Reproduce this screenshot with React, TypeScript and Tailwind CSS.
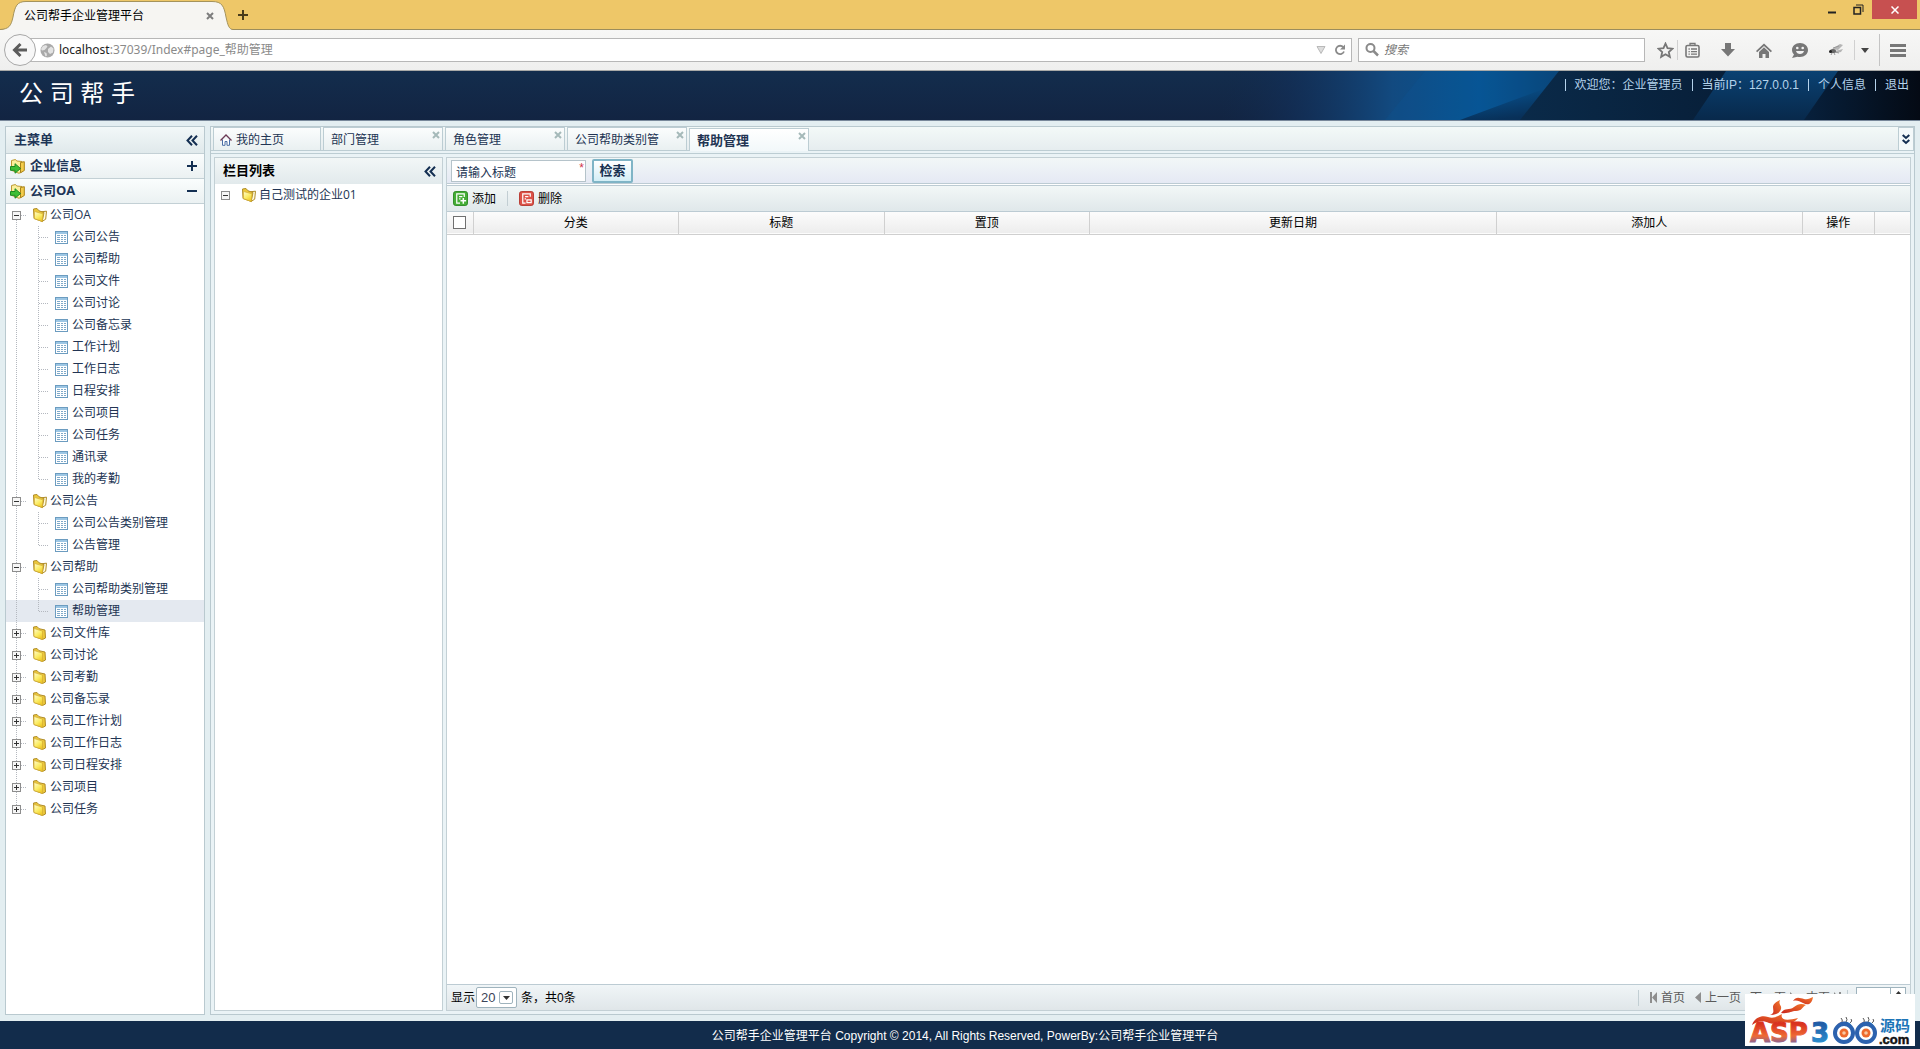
import React from "react";
import { Search } from "lucide-react";

type TreeGroup = { label: string; items?: string[] };

const groups: TreeGroup[] = [
  {
    label: "公司OA",
    items: [
      "公司公告", "公司帮助", "公司文件", "公司讨论", "公司备忘录", "工作计划",
      "工作日志", "日程安排", "公司项目", "公司任务", "通讯录", "我的考勤",
    ],
  },
  { label: "公司公告", items: ["公司公告类别管理", "公告管理"] },
  { label: "公司帮助", items: ["公司帮助类别管理", "帮助管理"] },
  { label: "公司文件库" },
  { label: "公司讨论" },
  { label: "公司考勤" },
  { label: "公司备忘录" },
  { label: "公司工作计划" },
  { label: "公司工作日志" },
  { label: "公司日程安排" },
  { label: "公司项目" },
  { label: "公司任务" },
];

const tabs = ["部门管理", "角色管理", "公司帮助类别管"];
const columns = ["分类", "标题", "置顶", "更新日期", "添加人", "操作"];

/* ---------- icons ---------- */

function Guide({ up, down, right, box }: { up?: boolean; down?: boolean; right?: boolean; box?: "plus" | "minus" }) {
  return (
    <svg width="22" height="22" viewBox="0 0 22 22" className="shrink-0" aria-hidden="true">
      <g stroke="#b4b8bf" strokeDasharray="1 1" fill="none">
        {up && <path d="M10.5 0V11" />}
        {down && <path d="M10.5 12V22" />}
        {right && <path d="M11 11.5H21" />}
      </g>
      {box && (
        <g>
          <rect x="6.5" y="7.5" width="8" height="8" fill="#f6f6f6" stroke="#8d8d8d" />
          <path d="M8 11.5h5" stroke="#333" />
          {box === "plus" && <path d="M10.5 9v5" stroke="#333" />}
        </g>
      )}
    </svg>
  );
}

function Folder({ open }: { open?: boolean }) {
  return (
    <svg width="22" height="22" viewBox="0 0 22 22" className="shrink-0" aria-hidden="true">
      <defs>
        <linearGradient id="fold" x1="0" y1="0" x2="0.6" y2="1">
          <stop offset="0" stopColor="#fffcd2" />
          <stop offset="0.6" stopColor="#fbec62" />
          <stop offset="1" stopColor="#efc929" />
        </linearGradient>
      </defs>
      {open && <path d="M11 8l7.500-.8-.8 8-3.700 2.300z" fill="#fffbe0" stroke="#b08d2a" strokeLinejoin="round" />}
      <path
        d={open ? "M5.500 5l3.500-.5 2 2.300 5 1.700-1.800 9-8.200-3z" : "M5.500 5l3.500-.5 2 2.200 6 1.300.5 8-3 1.500-8.500-3z"}
        fill="#ecc83a"
        stroke="#b08d2a"
        strokeLinejoin="round"
      />
      <path
        d={open ? "M6.500 7.500l8.500 2.300-.8 7.700-7.700-2.900z" : "M6 6.500l8.500 2.600V17.500L6 14.500z"}
        fill="url(#fold)"
        stroke="#d2ac35"
        strokeWidth="0.700"
        strokeLinejoin="round"
      />
    </svg>
  );
}

function FolderGo() {
  return (
    <svg width="16" height="16" viewBox="0 0 16 16" className="shrink-0" aria-hidden="true">
      <path d="M1.500 2.500l4-1 1.200 1.500 5.300.5v10l-3 1.800-7.500-3z" fill="#fbf09a" stroke="#bd9a34" strokeLinejoin="round" />
      <path d="M10.500 4.500l3.800-.8v8.800l-3.800 2.300z" fill="#f3cd4c" stroke="#a98218" strokeLinejoin="round" />
      <path d="M.5 8.500h4.500V5.700l5.500 4.800L5 15.200v-2.900H.5z" fill="#3fbf35" stroke="#1c8a22" strokeLinejoin="round" />
    </svg>
  );
}

function Sheet() {
  return (
    <svg width="22" height="22" viewBox="0 0 22 22" className="shrink-0" aria-hidden="true">
      <rect x="5.500" y="5.500" width="12" height="12" fill="#fff" stroke="#6c9cc0" />
      <rect x="6" y="6" width="11" height="2" fill="#9cc6e4" />
      <path d="M7 9.500h3M11 9.500h2M14 9.500h2M7 11.500h3M11 11.500h2M14 11.500h2M7 13.500h3M11 13.500h2M14 13.500h2M7 15.500h3M11 15.500h2M14 15.500h2" stroke="#7fa9c9" />
    </svg>
  );
}

function Chevrons() {
  return (
    <svg width="12" height="11" viewBox="0 0 12 11" fill="none" stroke="#142f52" strokeWidth="2" aria-hidden="true">
      <path d="M6 .7L1.500 5.500L6 10.300M11 .7L6.500 5.500L11 10.300" />
    </svg>
  );
}

function House() {
  return (
    <svg width="12" height="12" viewBox="0 0 12 12" aria-hidden="true">
      <path d="M2.500 5.500v5.800h2.500V7.500h2v3.800h2.500V5.500" fill="#fff" stroke="#4a6ea5" />
      <path d="M.5 6.500L6 1l5.500 5.500" fill="none" stroke="#6b3a55" strokeWidth="1.300" />
    </svg>
  );
}

function CloseX({ className }: { className?: string }) {
  return (
    <svg width="8" height="8" viewBox="0 0 8 8" className={className} stroke="currentColor" strokeWidth="2" aria-hidden="true">
      <path d="M1 1l6 6M7 1L1 7" />
    </svg>
  );
}

function ToolBadge({ remove }: { remove?: boolean }) {
  return (
    <svg width="15" height="15" viewBox="0 0 16 16" aria-hidden="true">
      <rect x=".5" y=".5" width="15" height="15" rx="2.500" fill={remove ? "#dc5147" : "#45ad36"} stroke={remove ? "#b5382f" : "#2c8a22"} />
      {remove ? (
        <path d="M12 6V3H4v10h3M6.500 6H10M6 8.500h1.500M8.500 9.500h4.500v3H8.500z" fill="none" stroke="#fff" strokeWidth="1.300" />
      ) : (
        <>
          <path d="M12 6.500V3H4v10h3.500M6.500 6H10M6.500 8.500H8" fill="none" stroke="#fff" strokeWidth="1.300" />
          <path d="M11 7.500v6M8 10.500h6" stroke="#fff" strokeWidth="1.600" />
        </>
      )}
    </svg>
  );
}

/* ---------- browser chrome ---------- */

function TitleBar() {
  return (
    <div className="flex h-[30px] items-stretch border-b border-[#9c8d5c] bg-[#eec768]">
      <div className="relative -mb-px h-[30px] w-[233px] shrink-0">
        <svg className="absolute inset-0" width="233" height="30" viewBox="0 0 233 30" aria-hidden="true">
          <path d="M0 30C9 29 11 26 13 17C15 6 17 1.500 26 1.500H212C222 1.500 224 6 226 17C228 26 229 29 233 30Z" fill="#f6f5f2" />
          <path d="M0 29.500C9 29 11 26 13 17C15 6 17 1.500 26 1.500H212C222 1.500 224 6 226 17C228 26 229 29 233 29.500" fill="none" stroke="#a5935b" />
        </svg>
        <div className="relative flex h-full items-center pt-px pr-[19px] pl-6">
          <span className="flex-1 text-black">公司帮手企业管理平台</span>
          <button aria-label="关闭标签页"><CloseX className="text-[#7d7d7d]" /></button>
        </div>
      </div>
      <button className="flex w-5 items-center justify-center pt-px" aria-label="新标签页">
        <svg width="10" height="10" viewBox="0 0 10 10" stroke="#4a3c1a" strokeWidth="2"><path d="M5 0v10M0 5h10" /></svg>
      </button>
      <div className="ml-auto flex items-start pr-[3px]">
        <button className="flex h-[18px] w-[26px] items-center justify-center" aria-label="最小化">
          <svg width="8" height="10" viewBox="0 0 8 10"><path d="M0 8.500h8" stroke="#222" strokeWidth="2" /></svg>
        </button>
        <button className="flex h-[18px] w-[27px] items-center justify-center" aria-label="还原">
          <svg width="11" height="11" viewBox="0 0 11 11" fill="none" stroke="#222"><path d="M1 3.500h6.500V10H1z" strokeWidth="1.500" /><path d="M3 1h7v7" /></svg>
        </button>
        <button className="flex h-[19px] w-[45px] items-center justify-center bg-[#c75050]" aria-label="关闭">
          <svg width="8" height="8" viewBox="0 0 8 8" stroke="#fff" strokeWidth="1.500"><path d="M.5.5l7 7M7.500.5l-7 7" /></svg>
        </button>
      </div>
    </div>
  );
}

const barButton = "flex h-6 w-9 items-center justify-center";

function NavBar() {
  return (
    <div className="flex h-[41px] items-center border-b border-[#a9aaa8] bg-linear-to-b from-[#f7f7f6] to-[#efefee] pl-1 text-[#808080]">
      <button className="z-10 flex size-8 shrink-0 items-center justify-center rounded-full border border-[#a8a8a8] bg-[#f7f7f7]" aria-label="后退">
        <svg width="16" height="16" viewBox="0 0 16 16" fill="none" stroke="#5c5c5c" strokeWidth="3"><path d="M8.500 2L2.500 8l6 6M3 8h12" /></svg>
      </button>
      <div className="-ml-4 flex h-6 flex-1 items-center border border-[#b7b7b7] bg-white pr-1 pl-[19px]">
        <svg width="15" height="15" viewBox="0 0 15 15" aria-hidden="true">
          <circle cx="7.500" cy="7.500" r="7" fill="#a9a9a9" />
          <path d="M3 3l3-1 1.500 1.500L6 5.500 4.500 7 2 7.500 1 6zM8 6l3-2.500 2.500 2-.5 4-3 1.500-2-2zM4 9l2.500 1 .5 2.500-1.500 1z" fill="#e3e3e3" />
        </svg>
        <span className="ml-1 flex-1 font-['Noto_Sans','Noto_Sans_CJK_SC',sans-serif] text-xs text-[#8a8a8a]">
          <span className="text-[#222]">localhost</span>:37039/Index#page_帮助管理
        </span>
        <svg width="10" height="8" viewBox="0 0 10 8" className="mr-2" aria-hidden="true"><path d="M1 .5h8L5 7.500z" fill="#ddd" stroke="#b9b9b9" /></svg>
        <button className="mr-px" aria-label="刷新">
          <svg width="12" height="12" viewBox="0 0 12 12"><path d="M9.300 3.200A4.200 4.200 0 1 0 10 7.500" fill="none" stroke="#8a8a8a" strokeWidth="1.800" /><path d="M11 .5v5H6z" fill="#8a8a8a" /></svg>
        </button>
      </div>
      <label className="ml-[6px] flex h-6 w-[287px] items-center border border-[#b7b7b7] bg-white pl-[6px]">
        <svg width="14" height="14" viewBox="0 0 14 14" fill="none" stroke="#8a8a8a" strokeWidth="2" aria-hidden="true">
          <circle cx="5.500" cy="5" r="4" /><path d="M8.500 8l4.500 4.500" strokeWidth="2.500" />
        </svg>
        <input className="ml-[5px] min-w-0 flex-1 text-xs italic outline-none placeholder:text-[#777]" placeholder="搜索" aria-label="搜索" />
      </label>
      <div className="flex items-center pr-1 pl-2">
        <button className="flex h-6 w-6 items-center justify-center" aria-label="收藏">
          <svg width="17" height="17" viewBox="0 0 16 16" fill="none" stroke="#777" strokeWidth="1.700"><path d="M8 1.500l1.900 4.300 4.700.5-3.500 3.100 1 4.600L8 11.600 3.900 14l1-4.600L1.400 6.300l4.700-.5z" /></svg>
        </button>
        <span className="-mr-1 h-5 w-px bg-[#d0d0d0]" />
        <button className={barButton} aria-label="书签">
          <svg width="15" height="16" viewBox="0 0 15 16" fill="none" stroke="#777" strokeWidth="1.600"><rect x="1" y="3.500" width="13" height="11.500" rx="1.500" /><path d="M5 3.500V1.500h5v2M3.500 7h1.300M6 7h6M3.500 9.600h1.300M6 9.600h6M3.500 12.200h1.300M6 12.200h6" strokeWidth="1.300" /></svg>
        </button>
        <button className={barButton} aria-label="下载">
          <svg width="14" height="16" viewBox="0 0 14 16" fill="#777"><path d="M4 1h6v6h4l-7 7.500L0 7h4z" /></svg>
        </button>
        <button className={barButton} aria-label="主页">
          <svg width="16" height="15" viewBox="0 0 16 15" fill="#777"><path d="M8 .5l8 7.500-1.200 1.200L8 3 1.200 9.200 0 8z" /><path d="M3 9l5-4.700L13 9v6H9.500v-4h-3v4H3z" /></svg>
        </button>
        <button className={barButton} aria-label="聊天">
          <svg width="16" height="15" viewBox="0 0 16 15"><path d="M8 0c4.500 0 8 3 8 7s-3.500 7-8 7c-1 0-1.800-.1-2.500-.3L0 15l2-3.500C.8 10.300 0 8.800 0 7c0-4 3.500-7 8-7z" fill="#777" /><circle cx="5.300" cy="5" r="1.300" fill="#f4f4f4" /><circle cx="10.700" cy="5" r="1.300" fill="#f4f4f4" /><path d="M4 8h8c-.5 2-2 3-4 3s-3.500-1-4-3z" fill="#f4f4f4" /></svg>
        </button>
        <button className={barButton} aria-label="调试">
          <svg width="16" height="14" viewBox="0 0 16 14"><path d="M4 6l8-5 3 1-5 5zM7 8l8-2-2 3-5 1z" fill="#b5b5b5" /><path d="M5 5l6-2M7 9l4 1M4 10l-1 2M6 10l1 2" stroke="#999" fill="none" /><ellipse cx="5" cy="8" rx="3" ry="2" fill="#666" /><circle cx="2.500" cy="8.500" r="1.500" fill="#222" /></svg>
        </button>
        <span className="h-5 w-px bg-[#d0d0d0]" />
        <button className="flex h-6 w-6 items-center justify-center pr-1" aria-label="更多">
          <svg width="8" height="5" viewBox="0 0 8 5"><path d="M0 0h8L4 5z" fill="#444" /></svg>
        </button>
        <span className="h-8 w-px bg-[#c4c4c4]" />
        <button className={barButton} aria-label="菜单">
          <svg width="16" height="13" viewBox="0 0 16 13" stroke="#777" strokeWidth="3"><path d="M0 1.500h16M0 6.500h16M0 11.500h16" /></svg>
        </button>
      </div>
    </div>
  );
}

/* ---------- application ---------- */

function AppHeader() {
  return (
    <header className="relative flex h-[50px] justify-between border-b border-[#78889a] bg-linear-to-b from-[#132d4d] to-[#122442]">
      <svg className="absolute top-0 right-0 h-full w-[700px]" viewBox="0 0 700 49" preserveAspectRatio="none" aria-hidden="true">
        <defs>
          <linearGradient id="glow" x1="0" x2="1">
            <stop offset="0" stopColor="#12294a" stopOpacity="0" />
            <stop offset="0.2" stopColor="#12305a" stopOpacity="0.6" />
            <stop offset="0.5" stopColor="#124a80" />
            <stop offset="0.75" stopColor="#075492" />
            <stop offset="1" stopColor="#0a4172" />
          </linearGradient>
          <linearGradient id="band" x1="0" x2="1">
            <stop offset="0" stopColor="#0a2a49" />
            <stop offset="0.6" stopColor="#071d36" />
          </linearGradient>
          <linearGradient id="lit" x1="0" x2="0" y1="0" y2="1">
            <stop offset="0" stopColor="#0a4172" />
            <stop offset="1" stopColor="#08294b" />
          </linearGradient>
          <linearGradient id="end" x1="0" x2="1">
            <stop offset="0" stopColor="#07203c" />
            <stop offset="1" stopColor="#040a14" />
          </linearGradient>
          <linearGradient id="shade" x1="0" y1="0" x2="0.15" y2="1">
            <stop offset="0.3" stopColor="#081c38" stopOpacity="0" />
            <stop offset="1" stopColor="#081c38" stopOpacity="0.6" />
          </linearGradient>
        </defs>
        <rect width="345" height="49" fill="url(#glow)" />
        <path d="M205 0H345V49H165z" fill="#0a65ab" opacity="0.12" />
        <path d="M345 10V49H240z" fill="url(#shade)" />
        <path d="M339 0H700V49H300z" fill="url(#band)" />
        <path d="M506 0H700V49H473z" fill="url(#lit)" />
        <path d="M618 0H700V49H584z" fill="url(#end)" />
      </svg>
      <h1 className="relative pt-[5px] pl-[19px] text-2xl leading-9 font-normal text-white">公 司 帮 手</h1>
      <nav className="relative flex h-7 items-center gap-[9px] pr-[11px] text-[#b5d3ec]">
        <span className="h-3 w-px bg-current" />
        <span>欢迎您：企业管理员</span>
        <span className="h-3 w-px bg-current" />
        <span>当前IP：127.0.0.1</span>
        <span className="h-3 w-px bg-current" />
        <a href="#profile">个人信息</a>
        <span className="h-3 w-px bg-current" />
        <a href="#logout">退出</a>
      </nav>
    </header>
  );
}

function SideMenu() {
  return (
    <aside className="flex w-[200px] shrink-0 flex-col border border-[#b9c9cf] bg-white font-['Open_Sans','Noto_Sans_CJK_SC',sans-serif] text-[#223453]">
      <div className="flex h-[27px] items-center justify-between border-b border-[#c3d0d5] bg-linear-to-b from-[#f2f8f8] to-[#e0e9eb] pr-[6px] pl-2 text-[13px] font-bold text-[#1d3557]">
        <h2>主菜单</h2>
        <button aria-label="折叠主菜单"><Chevrons /></button>
      </div>
      {["企业信息", "公司OA"].map((title, i) => (
        <button key={title} className="flex h-[25px] items-center gap-1 border-b border-[#c3d0d5] bg-linear-to-b from-[#fafdfd] to-[#ebf1f2] pr-[7px] pl-1 text-[13px] font-bold text-[#1d3557]">
          <FolderGo />
          <span className="flex-1 text-left">{title}</span>
          <svg width="10" height="10" viewBox="0 0 10 10" stroke="#142f52" strokeWidth="2">
            <path d={i === 0 ? "M0 5h10M5 0v10" : "M0 5h10"} />
          </svg>
        </button>
      ))}
      <ul className="text-xs">
        {groups.map((g, gi) => {
          const last = gi === groups.length - 1;
          return (
            <li key={g.label}>
              <button className="flex h-[22px] w-full items-center">
                <Guide up={gi > 0} down={!last} right box={g.items ? "minus" : "plus"} />
                <Folder open={!!g.items} />
                <span>{g.label}</span>
              </button>
              {g.items && (
                <ul>
                  {g.items.map((item, i) => (
                    <li key={item} className={item === "帮助管理" ? "bg-[#e4e9f0]" : ""}>
                      <a href={"#page_" + item} className="flex h-[22px] items-center">
                        <Guide up down />
                        <Guide up right down={i < g.items!.length - 1} />
                        <Sheet />
                        <span>{item}</span>
                      </a>
                    </li>
                  ))}
                </ul>
              )}
            </li>
          );
        })}
      </ul>
    </aside>
  );
}

const tabBase = "relative flex h-[23px] items-center border border-b-0 border-[#bccdd3] pt-px text-[#223453]";

function TabStrip() {
  return (
    <div className="flex h-6 shrink-0 items-end gap-[2px] border-b border-[#bccdd3] bg-linear-to-b from-[#f3f9f8] to-[#e6edef] pl-[2px]">
      <button className={tabBase + " w-[108px] gap-1 bg-linear-to-b from-[#fbfdfd] to-[#e9f0f1] pl-[6px]"}>
        <House />
        <span>我的主页</span>
      </button>
      {tabs.map((t) => (
        <div key={t} className={tabBase + " w-[120px] bg-linear-to-b from-[#fbfdfd] to-[#e9f0f1] pl-[7px]"}>
          <button>{t}</button>
          <button className="absolute top-[3px] right-[2px]" aria-label={"关闭" + t}><CloseX className="text-[#a5b9b9]" /></button>
        </div>
      ))}
      <div className={tabBase + " -mb-px w-[120px] bg-linear-to-b from-white to-[#f2f8fa] pl-[7px] text-[13px] font-bold"}>
        <button>帮助管理</button>
        <button className="absolute top-[3px] right-[2px]" aria-label="关闭帮助管理"><CloseX className="text-[#a5b9b9]" /></button>
      </div>
      <button className="ml-auto flex h-[23px] w-4 items-center justify-center border border-b-0 border-[#bccdd3] bg-[#f4f9fa]" aria-label="更多标签">
        <svg width="8" height="11" viewBox="0 0 8 11" fill="none" stroke="#142f52" strokeWidth="2"><path d="M.7 1L4 4l3.300-3M.7 6L4 9l3.300-3" /></svg>
      </button>
    </div>
  );
}

function CategoryPanel() {
  return (
    <section className="w-[229px] shrink-0 border border-[#c3d0d5] bg-white">
      <div className="flex h-[26px] items-center justify-between bg-linear-to-b from-[#f2f7f7] to-[#e2eaec] pr-[6px] pl-2 text-[13px] font-bold text-black">
        <h2>栏目列表</h2>
        <button aria-label="折叠栏目列表"><Chevrons /></button>
      </div>
      <button className="flex h-[22px] items-center font-['Open_Sans','Noto_Sans_CJK_SC',sans-serif] text-xs text-[#223453]">
        <Guide box="minus" />
        <Folder open />
        <span>自己测试的企业01</span>
      </button>
    </section>
  );
}

function HelpPanel() {
  return (
    <section className="flex min-w-0 flex-1 flex-col border border-[#c3d0d5] bg-white">
      <form className="flex h-[26px] items-center gap-[6px] border-b border-[#bccbd3] bg-linear-to-b from-[#f2f7f7] to-[#e5e9f4] pl-1">
        <label className="relative flex">
          <input defaultValue="请输入标题" aria-label="标题" className="h-[22px] w-[135px] border border-[#b5c3ca] bg-white pt-px pl-[4px] text-xs text-[#223453] outline-none" />
          <span className="absolute top-0 right-[2px] leading-4 text-[#d0344a]">*</span>
        </label>
        <button type="button" className="h-6 w-[41px] rounded-xs border-2 border-[#7fb4c6] bg-linear-to-b from-white to-[#d3eef5] text-[13px] leading-4 font-bold text-[#16304f]">检索</button>
      </form>
      <div className="mt-px flex h-[27px] items-center border-y border-[#bccbd3] bg-linear-to-b from-[#f2f7f7] to-[#e0e8ea] pl-[6px] text-black">
        <button className="flex items-center gap-1"><ToolBadge /><span>添加</span></button>
        <span className="mx-[11px] h-[15px] w-px bg-[#c2ced3]" />
        <button className="flex items-center gap-1"><ToolBadge remove /><span>删除</span></button>
      </div>
      <div className="flex-1">
        <table className="w-full table-fixed border-collapse text-black">
          <colgroup>
            <col className="w-[26px]" />
            <col className="w-[14.05%]" />
            <col className="w-[14.05%]" />
            <col className="w-[14.05%]" />
            <col className="w-[27.8%]" />
            <col className="w-[20.9%]" />
            <col className="w-[4.93%]" />
            <col />
          </colgroup>
          <thead>
            <tr className="h-[22px] border-b border-[#cfcfcf] bg-linear-to-b from-[#fcfcfc] to-[#ededed]">
              <th className="border-r border-[#d0d0d0] p-0">
                <input type="checkbox" aria-label="全选" className="mx-auto block size-[13px] appearance-none border border-[#707070] bg-white" />
              </th>
              {columns.map((c) => (
                <th key={c} className="border-r border-[#d0d0d0] p-0 font-normal">{c}</th>
              ))}
              <td />
            </tr>
          </thead>
          <tbody />
        </table>
      </div>
      <div className="flex h-[26px] shrink-0 items-center border-t border-[#bccbd3] bg-linear-to-b from-[#f0f5f7] to-[#e0e6e9] pl-1 text-black">
        <label className="flex items-center">
          显示
          <span className="relative mx-px flex">
            <select className="h-[21px] w-[41px] appearance-none rounded-xs border border-[#9fb3bd] bg-white pl-1 text-[13px] text-[#3c4458]" defaultValue="20">
              <option>20</option>
            </select>
            <span className="pointer-events-none absolute top-1 right-1 flex h-[13px] w-[14px] items-center justify-center rounded-xs border border-[#9fb3bd]">
              <svg width="7" height="4" viewBox="0 0 7 4"><path d="M0 0h7L3.500 4z" fill="#333" /></svg>
            </span>
          </span>
        </label>
        <span className="ml-[3px]">条，共0条</span>
        <div className="ml-auto flex items-center pr-1 text-[#5a5a5a]">
          <span className="mr-[11px] h-4 w-px bg-[#c2ced3]" />
          <button className="mr-[10px] flex items-center gap-1">
            <svg width="7" height="11" viewBox="0 0 7 11" fill="#8e8e8e"><path d="M0 0h2v11H0zM7 0v11L2 5.500z" /></svg>首页
          </button>
          <button className="mr-[9px] flex items-center gap-1">
            <svg width="6" height="11" viewBox="0 0 6 11" fill="#8e8e8e"><path d="M6 0v11L0 5.500z" /></svg>上一页
          </button>
          <button className="mr-[10px] flex items-center gap-1">
            下一页<svg width="6" height="11" viewBox="0 0 6 11" fill="#8e8e8e"><path d="M0 0v11l6-5.500z" /></svg>
          </button>
          <button className="flex items-center gap-1">
            末页<svg width="7" height="11" viewBox="0 0 7 11" fill="#8e8e8e"><path d="M5 0h2v11H5zM0 0v11l5-5.500z" /></svg>
          </button>
          <span className="mr-2 ml-[6px] h-4 w-px bg-[#c2ced3]" />
          <span className="relative flex">
            <select aria-label="页码" className="h-[21px] w-[50px] appearance-none border border-[#9fb3bd] bg-white" />
            <span className="pointer-events-none absolute inset-y-0 right-0 flex w-4 justify-center border-l border-[#9fb3bd] pt-1">
              <svg width="7" height="4" viewBox="0 0 7 4"><path d="M3.500 0L7 4H0z" fill="#333" /></svg>
            </span>
          </span>
        </div>
      </div>
    </section>
  );
}

function SiteBadge() {
  return (
    <div className="absolute right-[5px] bottom-[3px]">
      <svg width="170" height="52" viewBox="0 0 170 52" className="block overflow-visible bg-white" role="img" aria-label="ASP300源码.com">
        <defs>
          <linearGradient id="asp" x1="0" y1="0" x2="0" y2="1">
            <stop offset="0.2" stopColor="#d9321f" />
            <stop offset="0.6" stopColor="#ee6a35" />
            <stop offset="0.9" stopColor="#6a61b4" />
          </linearGradient>
          <linearGradient id="num" x1="0" y1="0" x2="0" y2="1">
            <stop offset="0" stopColor="#1d4f9c" />
            <stop offset="1" stopColor="#2f9bd8" />
          </linearGradient>
          <linearGradient id="flame" x1="0" y1="1" x2="1" y2="0">
            <stop offset="0" stopColor="#c8231c" />
            <stop offset="1" stopColor="#f47a2c" />
          </linearGradient>
        </defs>
        <g fill="url(#flame)">
          <path d="M7 31C10 23 17 21 23 23C29 25 33 22 37 20C35 26 41 27 53 24C48 31 42 28 36 28C31 28 30 31 24 29C18 26 12 27 7 31Z" />
          <path d="M25 21C30 19 28 16 28 13C28 10 31 8 35 6C33 11 37 11 36 15C35 19 31 21 25 21Z" />
          <path d="M36 19C40 13 44 17 49 13C53 10 56 9 61 11C57 13 57 17 51 17C46 17 44 20 36 19Z" />
          <path d="M48 7C51 2 55 4 59 5C63 6 65 4 68 3C67 10 63 12 58 9C54 7 52 6 48 7Z" />
        </g>
        <g className="font-['DejaVu_Sans',sans-serif] font-bold" fontSize="26">
          <text x="5" y="48" fill="url(#asp)" stroke="url(#asp)">ASP</text>
          <g fill="url(#num)" stroke="url(#num)">
            <text x="66" y="48">3</text>
            <text x="90" y="48">0</text>
            <text x="112" y="48">0</text>
          </g>
        </g>
        {[99, 121].map((cx) => (
          <g key={cx}>
            <circle cx={cx} cy="39" r="9" fill="#fff" stroke="#2c62ae" strokeWidth="4" />
            <circle cx={cx} cy="39" r="4.500" fill="#ee6a2c" />
            <circle cx={cx} cy="39" r="1.800" fill="#f9c9a2" />
            <path d={`M${cx - 2} 28q1-2-1-4M${cx + 2} 28q2-2 0-5M${cx + 6} 29q3-2 1-4`} fill="none" stroke="#555" />
          </g>
        ))}
        <text x="135" y="37" fontSize="15" fill="#1d75b8" className="font-['Noto_Sans_CJK_SC',sans-serif] font-bold">源码</text>
        <text x="134" y="50" fontSize="13" fill="#111" stroke="#111" strokeWidth="0.500" className="font-['Liberation_Sans',sans-serif] font-bold">.com</text>
      </svg>
    </div>
  );
}

export default function App() {
  return (
    <div className="relative flex min-h-screen flex-col bg-[#e3eef1] font-['Liberation_Sans','Noto_Sans_CJK_SC',sans-serif] text-xs">
      <TitleBar />
      <NavBar />
      <AppHeader />
      <main className="flex flex-1 gap-[5px] px-[5px] pt-[5px] pb-[6px]">
        <SideMenu />
        <div className="flex min-w-0 flex-1 flex-col border border-[#b9c9cf] bg-[#eaf3f6]">
          <TabStrip />
          <div className="mt-[2px] flex flex-1 gap-[3px] border-t border-[#bccdd3] p-[3px]">
            <CategoryPanel />
            <HelpPanel />
          </div>
        </div>
      </main>
      <footer className="flex h-7 items-center justify-center bg-[#122c4b] pt-px pl-[10px] text-white">
        公司帮手企业管理平台 Copyright © 2014, All Rights Reserved, PowerBy:公司帮手企业管理平台
      </footer>
      <SiteBadge />
    </div>
  );
}
